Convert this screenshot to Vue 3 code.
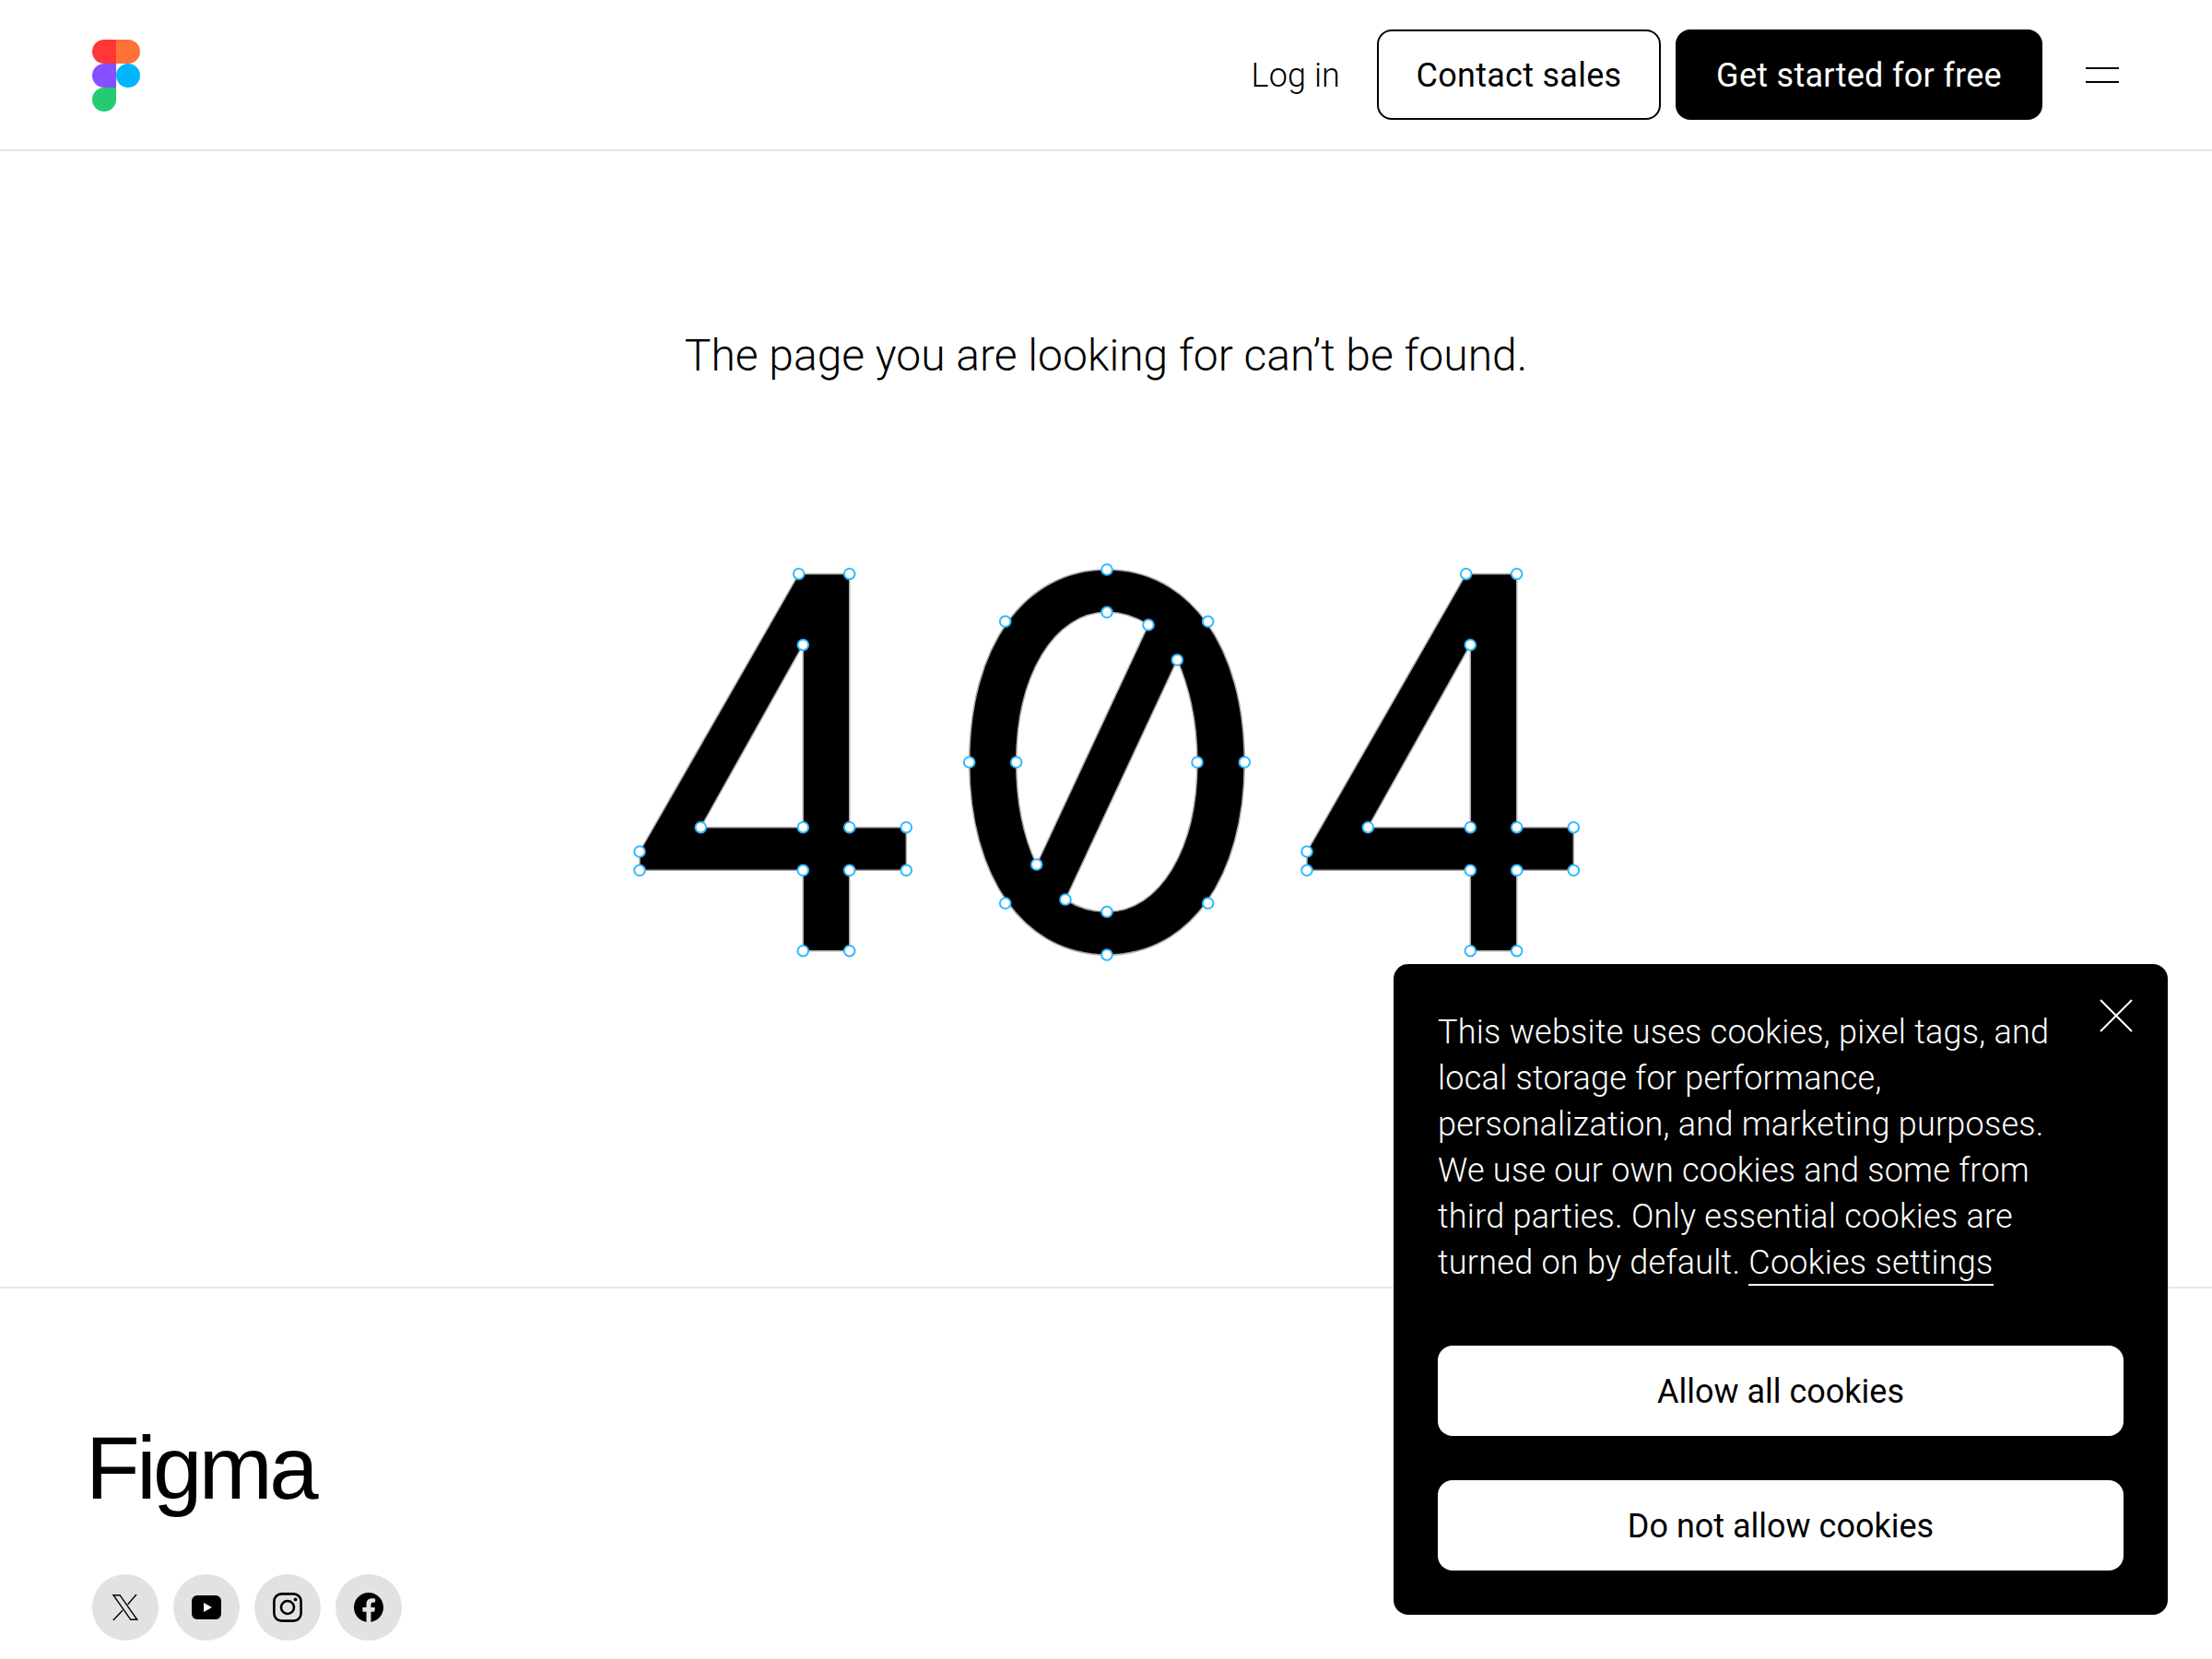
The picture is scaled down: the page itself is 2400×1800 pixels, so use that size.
<script setup>
const four = 'M866.7 622.7H921.7V897.7H983.3V944.3H921.7V1031.7H871.3V944.3H694V924ZM871.3 699.7L760.3 897.7H871.3Z'
const zero = 'M1201 618C1290.6 618 1350.3 701.6 1350.3 827C1350.3 952.4 1290.6 1036 1201 1036C1111.4 1036 1051.7 952.4 1051.7 827C1051.7 701.6 1111.4 618 1201 618ZM1246 678C1232 669 1217 664.3 1201 664.3C1144 664.3 1102.7 733 1102.7 827C1102.7 870 1110 907 1124.7 938ZM1277.3 716C1291 748 1299 785 1299 827C1299 921 1258 989.3 1201 989.3C1185 989.3 1170 985 1156 976Z'
const fourPts = [[866.7,622.7],[921.7,622.7],[871.3,699.7],[694,924],[694,944.3],[760.3,897.7],[871.3,897.7],[921.7,897.7],[983.3,897.7],[871.3,944.3],[921.7,944.3],[983.3,944.3],[871.3,1031.7],[921.7,1031.7]]
const zeroPts = [[1201,618],[1090.7,674.3],[1310.7,674.3],[1051.7,827],[1350.3,827],[1090.7,980],[1310.7,980],[1201,1036],[1201,664.3],[1102.7,827],[1299,827],[1201,989.3],[1246,678],[1277.3,716],[1124.7,938],[1156,976]]
const handles = [
  ...fourPts,
  ...fourPts.map(([x, y]) => [x + 724, y]),
  ...zeroPts
]
</script>

<template>
  <div class="page">
    <header class="header">
      <svg class="logo" viewBox="0 0 52 78" width="52" height="78" aria-label="Figma">
        <path fill="#ff3737" d="M26 0H13a13 13 0 0 0 0 26h13z"/>
        <path fill="#ff7237" d="M26 0h13a13 13 0 0 1 0 26H26z"/>
        <path fill="#874fff" d="M26 26H13a13 13 0 0 0 0 26h13z"/>
        <circle fill="#00b6ff" cx="39" cy="39" r="13"/>
        <path fill="#24cb71" d="M26 52H13a13 13 0 1 0 13 13z"/>
      </svg>
      <nav class="nav">
        <a class="login">Log in</a>
        <a class="btn btn-outline">Contact sales</a>
        <a class="btn btn-solid">Get started for free</a>
        <span class="burger"><i></i><i></i></span>
      </nav>
    </header>

    <main class="main">
      <h1 class="message">The page you are looking for can’t be found.</h1>
      <svg class="art" viewBox="680 600 1040 450" width="1040" height="450" aria-label="404">
        <g fill="#000" stroke="#a9a9a9" stroke-width="1.5">
          <path :d="four"/>
          <path :d="zero" fill-rule="evenodd"/>
          <path :d="four" transform="translate(724 0)"/>
        </g>
        <circle v-for="(p, i) in handles" :key="i" :cx="p[0]" :cy="p[1]" r="5.8" fill="#fff" stroke="#30b8ff" stroke-width="2"/>
      </svg>
    </main>

    <footer class="footer">
      <div class="brand">Figma</div>
      <div class="social">
        <a class="soc">
          <svg viewBox="0 0 32 32" width="32" height="32"><path fill="none" stroke="#000" stroke-width="1.4" stroke-linejoin="miter" d="M3 2.7H10L28.8 29.3H21.8Z"/><path fill="none" stroke="#000" stroke-width="1.4" d="M28 2L18.6 12.8M13 19.2L2.8 30"/></svg>
        </a>
        <a class="soc">
          <svg viewBox="0 0 32 32" width="32" height="32"><rect x="0" y="3" width="32" height="26" rx="6" fill="#000"/><path fill="#fff" d="M13 11l9 5-9 5z"/></svg>
        </a>
        <a class="soc">
          <svg viewBox="0 0 32 32" width="32" height="32"><rect x="1.4" y="1.4" width="29.2" height="29.2" rx="8" fill="none" stroke="#000" stroke-width="2.6"/><circle cx="16" cy="16" r="7" fill="none" stroke="#000" stroke-width="2.6"/><circle cx="24.6" cy="7.4" r="1.9" fill="#000"/></svg>
        </a>
        <a class="soc">
          <svg viewBox="0 0 24 24" width="32" height="32"><path fill="#000" d="M24 12.073c0-6.627-5.373-12-12-12s-12 5.373-12 12c0 5.99 4.388 10.954 10.125 11.854v-8.385H7.078v-3.47h3.047V9.43c0-3.007 1.792-4.669 4.533-4.669 1.312 0 2.686.235 2.686.235v2.953H15.83c-1.491 0-1.956.925-1.956 1.874v2.25h3.328l-.532 3.47h-2.796v8.385C19.612 23.027 24 18.062 24 12.073z"/></svg>
        </a>
      </div>
    </footer>

    <aside class="cookie">
      <svg class="close" viewBox="0 0 36 36" width="36" height="36"><path d="M1 1L35 35M35 1L1 35" stroke="#fff" stroke-width="2" fill="none"/></svg>
      <p class="cookie-text">This website uses cookies, pixel tags, and local storage for performance, personalization, and marketing purposes. We use our own cookies and some from third parties. Only essential cookies are turned on by default. <a class="cookie-link">Cookies settings</a></p>
      <div class="cookie-actions">
        <button class="cookie-btn">Allow all cookies</button>
        <button class="cookie-btn">Do not allow cookies</button>
      </div>
    </aside>
  </div>
</template>

<style>
html, body { margin: 0; background: #fff; overflow: hidden; }
</style>

<style scoped>
.page {
  width: 2400px;
  height: 1800px;
  overflow: hidden;
  position: relative;
  color: #000;
  font-family: Roboto, "Liberation Sans", sans-serif;
}
.header {
  height: 160px;
  padding: 2px 101px 0 100px;
  border-bottom: 2px solid #e6e6e6;
  display: flex;
  align-items: center;
  justify-content: space-between;
}
.logo { display: block; }
.nav { display: flex; align-items: center; margin-top: -2px; }
.login { font-size: 36px; line-height: 48px; font-weight: 300; letter-spacing: 0.1px; margin-right: 40px; margin-top: 2px; }
.btn {
  box-sizing: border-box;
  height: 98px;
  border-radius: 16px;
  font-size: 36px;
  font-weight: 400;
  letter-spacing: 0.28px;
  padding-top: 2px;
  display: flex;
  align-items: center;
  justify-content: center;
}
.btn-outline { width: 308px; border: 2px solid #000; margin-right: 16px; }
.btn-solid { width: 398px; background: #000; color: #fff; margin-right: 47px; }
.burger { display: flex; flex-direction: column; gap: 13px; width: 36px; }
.burger i { display: block; height: 2px; background: #000; }
.main {
  height: 1232px;
  box-sizing: border-box;
  padding-top: 192px;
  display: flex;
  flex-direction: column;
  align-items: center;
}
.message {
  margin: 0;
  font-size: 48px;
  line-height: 60px;
  font-weight: 300;
}
.art { display: block; margin-top: 184px; }
.footer {
  border-top: 2px solid #e6e6e6;
  padding: 140px 100px 0;
}
.brand {
  font-family: "Liberation Sans", Arial, sans-serif;
  font-size: 96px;
  line-height: 110px;
  letter-spacing: -3.5px;
  margin-left: -7px;
}
.social { display: flex; gap: 16px; margin-top: 60px; }
.soc {
  width: 72px;
  height: 72px;
  border-radius: 50%;
  background: #e2e2e2;
  display: flex;
  align-items: center;
  justify-content: center;
}
.cookie {
  position: absolute;
  right: 48px;
  bottom: 48px;
  width: 840px;
  height: 706px;
  box-sizing: border-box;
  padding: 49px 48px 48px;
  background: #000;
  color: #fff;
  border-radius: 16px;
  display: flex;
  flex-direction: column;
}
.close { position: absolute; left: 766px; top: 38px; }
.cookie-text {
  margin: 0;
  width: 700px;
  font-size: 36px;
  line-height: 50px;
  font-weight: 300;
  letter-spacing: 0.25px;
}
.cookie-link { border-bottom: 2px solid #fff; padding-bottom: 2px; }
.cookie-actions { display: flex; flex-direction: column; gap: 48px; margin-top: auto; }
.cookie-btn {
  height: 98px;
  border: 0;
  border-radius: 16px;
  background: #fff;
  color: #000;
  font-family: inherit;
  font-size: 36px;
  font-weight: 400;
  padding-top: 2px;
}
</style>
